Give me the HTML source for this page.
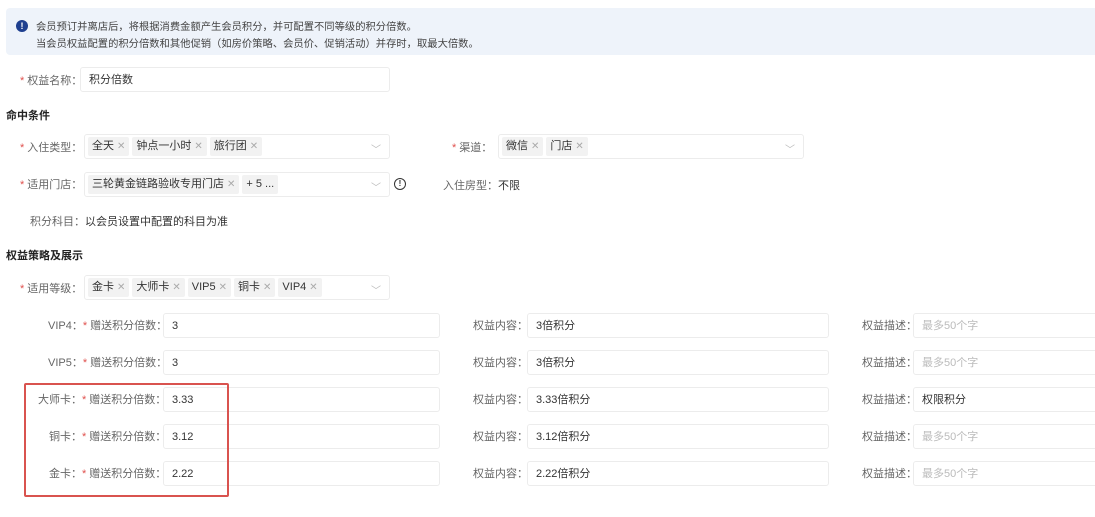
<!DOCTYPE html><html><head><meta charset="utf-8"><style>
*{margin:0;padding:0;box-sizing:border-box}
body{width:1095px;height:517px;background:#fff;position:relative;overflow:hidden;font-family:"Liberation Sans","Noto Sans CJK SC",sans-serif;font-size:11px;color:#333}
.a{position:absolute;white-space:nowrap}
.lbl{color:#666}
.st{color:#e0504d;margin-right:3px}
.in{position:absolute;border:1px solid #ececec;border-radius:3px;height:25px;padding:0 8px;line-height:24px;background:#fff}
.tag{display:inline-block;background:#f2f2f2;border-radius:2px;padding:0 4px;height:19px;line-height:19px;margin:2px 3px 0 0;vertical-align:top;color:#333}
.tag i{font-style:normal;color:#aaa;margin-left:3px;font-size:10px}
.sel{padding:0 3px}
.arr{position:absolute;right:8px;top:4px;color:#bbb;font-size:10px}
.h{font-weight:bold;color:#222}
.ph{color:#bbb}
</style></head><body>
<div class="a" style="left:6px;top:8px;width:1095px;height:47px;background:#eef3fa;border-radius:4px"></div>
<div class="a" style="left:16px;top:20px;width:12px;height:12px;border-radius:50%;background:#1e3f8f;color:#fff;font-size:9px;line-height:12px;text-align:center;font-weight:bold">!</div>
<div class="a" style="left:36px;top:18px;color:#444;font-size:10.3px">会员预订并离店后，将根据消费金额产生会员积分，并可配置不同等级的积分倍数。</div>
<div class="a" style="left:36px;top:35px;color:#444;font-size:10.3px">当会员权益配置的积分倍数和其他促销（如房价策略、会员价、促销活动）并存时，取最大倍数。</div>

<div class="a lbl" style="left:20px;top:72px"><span class="st">*</span>权益名称：</div>
<div class="in" style="left:80px;top:67px;width:310px">积分倍数</div>
<div class="a h" style="left:6px;top:107px">命中条件</div>

<div class="a lbl" style="left:20px;top:139px"><span class="st">*</span>入住类型：</div>
<div class="in sel" style="left:84px;top:134px;width:306px"><span class="tag">全天<i>✕</i></span><span class="tag">钟点一小时<i>✕</i></span><span class="tag">旅行团<i>✕</i></span><span class="arr">﹀</span></div>
<div class="a lbl" style="left:452px;top:139px"><span class="st">*</span>渠道：</div>
<div class="in sel" style="left:498px;top:134px;width:306px"><span class="tag">微信<i>✕</i></span><span class="tag">门店<i>✕</i></span><span class="arr">﹀</span></div>

<div class="a lbl" style="left:20px;top:176px"><span class="st">*</span>适用门店：</div>
<div class="in sel" style="left:84px;top:172px;width:306px"><span class="tag">三轮黄金链路验收专用门店<i>✕</i></span><span class="tag">+ 5 ...</span><span class="arr">﹀</span></div>
<div class="a" style="left:394px;top:178px;width:12px;height:12px;border:1.3px solid #333;border-radius:50%;font-size:8px;line-height:10px;text-align:center;font-weight:bold">!</div>
<div class="a lbl" style="left:443px;top:177px">入住房型：<span style="color:#333">不限</span></div>

<div class="a lbl" style="left:30px;top:213px">积分科目：<span style="color:#333">以会员设置中配置的科目为准</span></div>
<div class="a h" style="left:6px;top:247px">权益策略及展示</div>

<div class="a lbl" style="left:20px;top:280px"><span class="st">*</span>适用等级：</div>
<div class="in sel" style="left:84px;top:275px;width:306px"><span class="tag">金卡<i>✕</i></span><span class="tag">大师卡<i>✕</i></span><span class="tag">VIP5<i>✕</i></span><span class="tag">铜卡<i>✕</i></span><span class="tag">VIP4<i>✕</i></span><span class="arr">﹀</span></div>

<div class="a lbl" style="left:48px;top:317px">VIP4：<span class="st">*</span>赠送积分倍数：</div>
<div class="in" style="left:163px;top:313px;width:277px">3</div>
<div class="a lbl" style="left:473px;top:317px">权益内容：</div>
<div class="in" style="left:527px;top:313px;width:302px">3倍积分</div>
<div class="a lbl" style="left:862px;top:317px">权益描述：</div>
<div class="in" style="left:913px;top:313px;width:200px"><span class="ph">最多50个字</span></div>

<div class="a lbl" style="left:48px;top:354px">VIP5：<span class="st">*</span>赠送积分倍数：</div>
<div class="in" style="left:163px;top:350px;width:277px">3</div>
<div class="a lbl" style="left:473px;top:354px">权益内容：</div>
<div class="in" style="left:527px;top:350px;width:302px">3倍积分</div>
<div class="a lbl" style="left:862px;top:354px">权益描述：</div>
<div class="in" style="left:913px;top:350px;width:200px"><span class="ph">最多50个字</span></div>

<div class="a lbl" style="left:38px;top:391px">大师卡：<span class="st">*</span>赠送积分倍数：</div>
<div class="in" style="left:163px;top:387px;width:277px">3.33</div>
<div class="a lbl" style="left:473px;top:391px">权益内容：</div>
<div class="in" style="left:527px;top:387px;width:302px">3.33倍积分</div>
<div class="a lbl" style="left:862px;top:391px">权益描述：</div>
<div class="in" style="left:913px;top:387px;width:200px">权限积分</div>

<div class="a lbl" style="left:49px;top:428px">铜卡：<span class="st">*</span>赠送积分倍数：</div>
<div class="in" style="left:163px;top:424px;width:277px">3.12</div>
<div class="a lbl" style="left:473px;top:428px">权益内容：</div>
<div class="in" style="left:527px;top:424px;width:302px">3.12倍积分</div>
<div class="a lbl" style="left:862px;top:428px">权益描述：</div>
<div class="in" style="left:913px;top:424px;width:200px"><span class="ph">最多50个字</span></div>

<div class="a lbl" style="left:49px;top:465px">金卡：<span class="st">*</span>赠送积分倍数：</div>
<div class="in" style="left:163px;top:461px;width:277px">2.22</div>
<div class="a lbl" style="left:473px;top:465px">权益内容：</div>
<div class="in" style="left:527px;top:461px;width:302px">2.22倍积分</div>
<div class="a lbl" style="left:862px;top:465px">权益描述：</div>
<div class="in" style="left:913px;top:461px;width:200px"><span class="ph">最多50个字</span></div>

<div class="a" style="left:24px;top:383px;width:205px;height:114px;border:2px solid #d9534f;border-radius:2px"></div>
</body></html>
